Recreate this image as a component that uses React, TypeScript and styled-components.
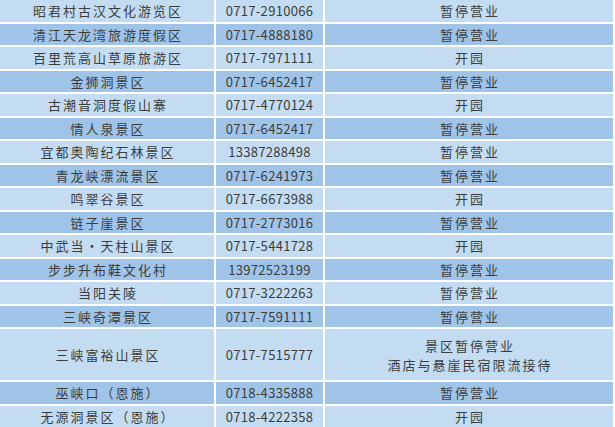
import React from "react";
import styled, { createGlobalStyle } from "styled-components";

const GlobalStyle = createGlobalStyle`
  html, body {
    margin: 0;
    padding: 0;
    background: #fff;
  }
  body {
    font-family: "Noto Sans CJK SC", "Noto Sans", sans-serif;
  }
`;

const Table = styled.div`
  width: 613px;
  display: flex;
  flex-direction: column;
  gap: 2px;
  background: #fff;
`;

const Row = styled.div<{ $dark?: boolean; $tall?: boolean }>`
  display: grid;
  grid-template-columns: 214px 107px 288px;
  column-gap: 2px;
  height: ${(p) => (p.$tall ? "51px" : "21.5px")};

  & > div {
    background: ${(p) => (p.$dark ? "#a0c4e8" : "#c4dcf1")};
  }
`;

const Cell = styled.div<{ $kind: "name" | "phone" | "status" }>`
  display: flex;
  flex-direction: column;
  align-items: center;
  justify-content: center;
  color: #3c3c3c;
  font-size: 13px;
  line-height: 19px;
  letter-spacing: ${(p) => (p.$kind === "phone" ? "0.3px" : "2px")};
  white-space: nowrap;
  padding-left: ${(p) => (p.$kind === "phone" ? "0" : "2px")};
`;

type Item = { name: string; phone: string; status: string[] };

const items: Item[] = [
  { name: "昭君村古汉文化游览区", phone: "0717-2910066", status: ["暂停营业"] },
  { name: "清江天龙湾旅游度假区", phone: "0717-4888180", status: ["暂停营业"] },
  { name: "百里荒高山草原旅游区", phone: "0717-7971111", status: ["开园"] },
  { name: "金狮洞景区", phone: "0717-6452417", status: ["暂停营业"] },
  { name: "古潮音洞度假山寨", phone: "0717-4770124", status: ["开园"] },
  { name: "情人泉景区", phone: "0717-6452417", status: ["暂停营业"] },
  { name: "宜都奥陶纪石林景区", phone: "13387288498", status: ["暂停营业"] },
  { name: "青龙峡漂流景区", phone: "0717-6241973", status: ["暂停营业"] },
  { name: "鸣翠谷景区", phone: "0717-6673988", status: ["开园"] },
  { name: "链子崖景区", phone: "0717-2773016", status: ["暂停营业"] },
  { name: "中武当・天柱山景区", phone: "0717-5441728", status: ["开园"] },
  { name: "步步升布鞋文化村", phone: "13972523199", status: ["暂停营业"] },
  { name: "当阳关陵", phone: "0717-3222263", status: ["暂停营业"] },
  { name: "三峡奇潭景区", phone: "0717-7591111", status: ["暂停营业"] },
  {
    name: "三峡富裕山景区",
    phone: "0717-7515777",
    status: ["景区暂停营业", "酒店与悬崖民宿限流接待"],
  },
  { name: "巫峡口（恩施）", phone: "0718-4335888", status: ["暂停营业"] },
  { name: "无源洞景区（恩施）", phone: "0718-4222358", status: ["开园"] },
];

export default function App() {
  return (
    <>
      <GlobalStyle />
      <Table>
        {items.map((it, i) => (
          <Row key={it.name} $dark={i % 2 === 1} $tall={it.status.length > 1}>
            <Cell $kind="name">{it.name}</Cell>
            <Cell $kind="phone">{it.phone}</Cell>
            <Cell $kind="status">
              {it.status.map((s) => (
                <span key={s}>{s}</span>
              ))}
            </Cell>
          </Row>
        ))}
      </Table>
    </>
  );
}
